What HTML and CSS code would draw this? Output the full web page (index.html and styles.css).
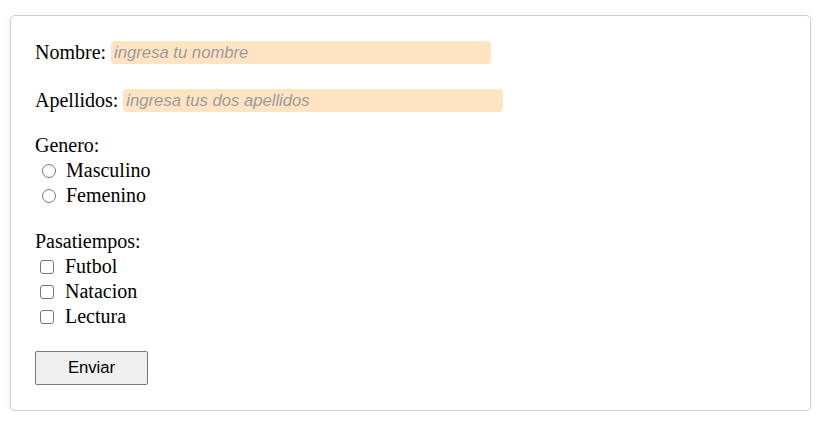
FILE: index.html
```html
<!DOCTYPE html>
<html lang="es">
<head>
<meta charset="utf-8">
<title>Formulario</title>
<link rel="stylesheet" href="styles.css">
</head>
<body>
<form class="card">
  <div class="field">
    <label for="nombre">Nombre:</label>
    <input class="text" id="nombre" type="text" placeholder="ingresa tu nombre">
  </div>
  <div class="field field-second">
    <label for="apellidos">Apellidos:</label>
    <input class="text" id="apellidos" type="text" placeholder="ingresa tus dos apellidos">
  </div>
  <div class="group group-genero">
    <div class="row">Genero:</div>
    <label class="row option"><input class="radio" type="radio" name="genero"><span>Masculino</span></label>
    <label class="row option"><input class="radio" type="radio" name="genero"><span>Femenino</span></label>
  </div>
  <div class="group group-pasa">
    <div class="row">Pasatiempos:</div>
    <label class="row option"><input class="check" type="checkbox"><span>Futbol</span></label>
    <label class="row option"><input class="check" type="checkbox"><span>Natacion</span></label>
    <label class="row option"><input class="check" type="checkbox"><span>Lectura</span></label>
  </div>
  <div class="actions">
    <button class="btn" type="submit">Enviar</button>
  </div>
</form>
</body>
</html>
```
FILE: styles.css
```css
html, body {
  margin: 0;
  padding: 0;
  background: #ffffff;
}
body {
  padding: 15px 0 0 10px;
  font-family: "Liberation Serif", "Times New Roman", serif;
  font-size: 20px;
  color: #000;
}
.card {
  box-sizing: border-box;
  width: 801px;
  border: 1px solid #cfcfcf;
  border-radius: 5px;
  box-shadow: 0 1px 6px rgba(0, 0, 0, 0.08);
  padding: 25px 24px 25px 24px;
  display: flex;
  flex-direction: column;
}
.field {
  display: flex;
  align-items: center;
  height: 23px;
  white-space: pre;
}
.field label {
  margin-right: 5px;
}
.field-second {
  margin-top: 25px;
}
.text {
  box-sizing: border-box;
  width: 380px;
  height: 23px;
  border: none;
  border-radius: 4px;
  background: #ffe4c4;
  padding: 0 3px;
  font-family: "Liberation Sans", Arial, sans-serif;
  font-size: 16.67px;
  font-style: italic;
  color: #000;
  outline: none;
}
.text::placeholder {
  color: #9a9a9a;
  font-style: italic;
}
.group {
  display: flex;
  flex-direction: column;
}
.group-genero {
  margin-top: 21px;
}
.group-pasa {
  margin-top: 21px;
}
.row {
  height: 25px;
  line-height: 25px;
  display: flex;
  align-items: center;
}
.option span {
  line-height: 25px;
}
.radio {
  appearance: none;
  -webkit-appearance: none;
  box-sizing: border-box;
  width: 14px;
  height: 14px;
  margin: 0 10px 0 7px;
  border: 1.2px solid #767676;
  border-radius: 50%;
  background: #fff;
}
.check {
  appearance: none;
  -webkit-appearance: none;
  box-sizing: border-box;
  width: 14px;
  height: 14px;
  margin: 0 11px 0 5px;
  border: 1.2px solid #767676;
  border-radius: 3px;
  background: #fff;
}
.actions {
  margin-top: 22px;
  display: flex;
}
.btn {
  box-sizing: border-box;
  width: 113px;
  height: 34px;
  background: #efefef;
  border: 1px solid #767676;
  border-radius: 2px;
  font-family: "Liberation Sans", Arial, sans-serif;
  font-size: 16.67px;
  color: #000;
  padding: 0;
}
```
